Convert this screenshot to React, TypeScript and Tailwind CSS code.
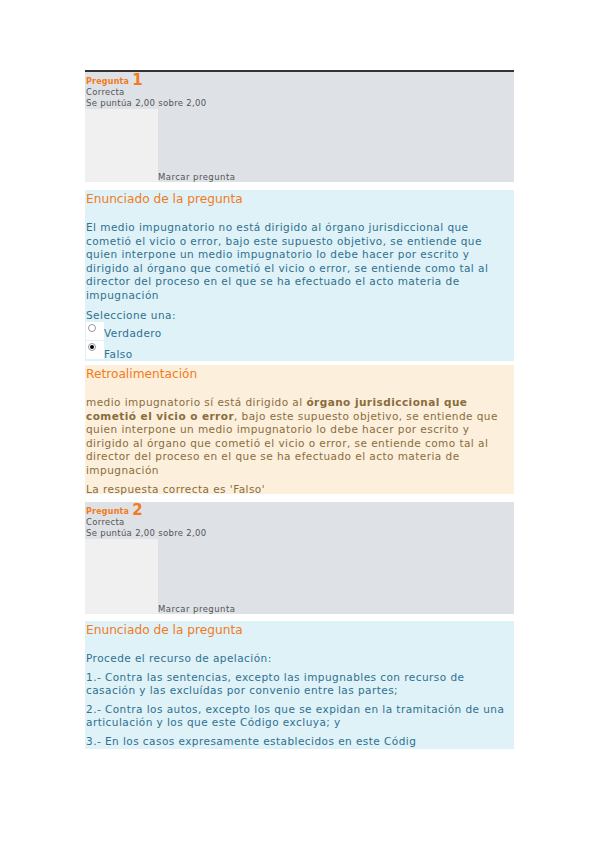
import React from 'react'

const FONT = { fontFamily: '"DejaVu Sans", "Noto Sans", sans-serif' }

function InfoBox({ num, topBorder }: { num: number; topBorder?: boolean }) {
  return (
    <div
      className={`h-[112px] bg-[#dee2e6] pl-px text-[8.5px] leading-[11px] tracking-[0.3px] text-[#555] flex flex-col ${
        topBorder ? 'border-t-2 border-[#333]' : ''
      }`}
    >
      <div className="flex items-end gap-[3px] pt-[2px] text-[#f47a20]">
        <span className="font-bold text-[8px] leading-[11px] tracking-[0.2px]">Pregunta</span>
        <span className="text-[15px] leading-[13px] font-bold">{num}</span>
      </div>
      <div>Correcta</div>
      <div>Se puntúa 2,00 sobre 2,00</div>
      <div className="flex flex-1 items-end">
        <div className="w-[73px] h-full -ml-px bg-[#f0f0f0]" />
        <div className="leading-[9px] tracking-[0.45px]">Marcar pregunta</div>
      </div>
    </div>
  )
}

function Title({ children }: { children: React.ReactNode }) {
  return <div className="text-[12.2px] leading-[16px] text-[#f47a20] pt-[1px]">{children}</div>
}

function Radio({ checked }: { checked?: boolean }) {
  return (
    <div className="w-[18px] h-[18px] bg-white pl-[2px] pt-[2px]">
      <div className="w-[8px] h-[8px] rounded-full border border-[#999] bg-white flex items-center justify-center">
        {checked && <div className="w-[4px] h-[4px] rounded-full bg-black" />}
      </div>
    </div>
  )
}

const BODY = 'text-[10.5px] leading-[13.6px] tracking-[0.45px]'

export default function App() {
  return (
    <div className="min-h-[848px] bg-white" style={FONT}>
      <div className="ml-[85px] w-[429px] pt-[70px] flex flex-col">
        <InfoBox num={1} topBorder />

        <div className="mt-[8px] bg-[#def2f8] text-[#31708f] pl-px pr-[2px] pb-[2px] h-[171px]">
          <Title>Enunciado de la pregunta</Title>
          <p className={`mt-[14px] ${BODY}`}>
            El medio impugnatorio no está dirigido al órgano jurisdiccional que cometió el vicio o error, bajo
            este supuesto objetivo, se entiende que quien interpone un medio impugnatorio lo debe hacer por
            escrito y dirigido al órgano que cometió el vicio o error, se entiende como tal al director del
            proceso en el que se ha efectuado el acto materia de impugnación
          </p>
          <div className={`mt-[6px] ${BODY}`}>Seleccione una:</div>
          <div className={`flex items-end ${BODY}`}>
            <Radio />
            <span>Verdadero</span>
          </div>
          <div className={`mt-px flex ${BODY}`}>
            <Radio checked />
            <span className="pt-[7px]">Falso</span>
          </div>
        </div>

        <div className="mt-[4px] bg-[#fcefdc] text-[#8a6d3b] pl-px pr-[2px] h-[129px]">
          <Title>Retroalimentación</Title>
          <p className={`mt-[14px] ${BODY}`}>
            medio impugnatorio sí está dirigido al <b>órgano jurisdiccional que cometió el vicio o error</b>,
            bajo este supuesto objetivo, se entiende que quien interpone un medio impugnatorio lo debe hacer
            por escrito y dirigido al órgano que cometió el vicio o error, se entiende como tal al director del
            proceso en el que se ha efectuado el acto materia de impugnación
          </p>
          <div className={`mt-[5px] ${BODY}`}>La respuesta correcta es 'Falso'</div>
        </div>

        <div className="mt-[8px]">
          <InfoBox num={2} />
        </div>

        <div className="mt-[7px] bg-[#def2f8] text-[#31708f] pl-px pr-[2px] h-[128px] overflow-hidden">
          <Title>Enunciado de la pregunta</Title>
          <div className={`mt-[14px] flex flex-col gap-[5px] ${BODY}`}>
            <p>Procede el recurso de apelación:</p>
            <p>
              1.- Contra las sentencias, excepto las impugnables con recurso de casación y las excluídas por
              convenio entre las partes;
            </p>
            <p>
              2.- Contra los autos, excepto los que se expidan en la tramitación de una articulación y los que
              este Código excluya; y
            </p>
            <p>3.- En los casos expresamente establecidos en este Códig</p>
          </div>
        </div>
      </div>
    </div>
  )
}
